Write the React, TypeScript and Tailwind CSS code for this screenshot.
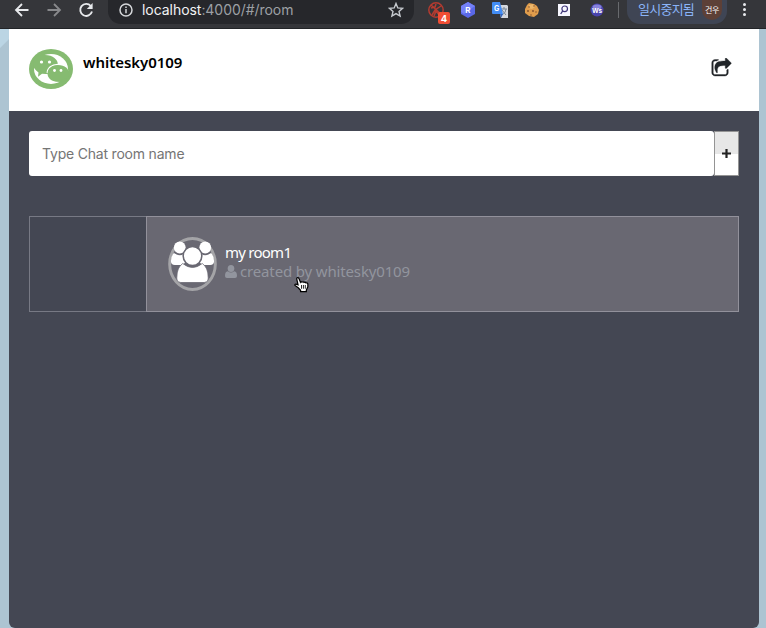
import React from "react";

function BrowserBar() {
  return (
    <div className="flex h-[29px] shrink-0 items-start border-b border-[#222427] bg-[#35363a] font-['Inter','Noto_Sans_CJK_KR',sans-serif]">
      <svg className="mt-[2px] ml-[14px] h-4 w-4" viewBox="0 0 16 16" fill="none" stroke="#e8eaed" strokeWidth="1.8">
        <path d="M14.5 8H2M8 2L2 8l6 6" />
      </svg>
      <svg className="mt-[2px] ml-[16px] h-4 w-4" viewBox="0 0 16 16" fill="none" stroke="#88898c" strokeWidth="1.8">
        <path d="M1.5 8H14M8 2l6 6-6 6" />
      </svg>
      <svg className="mt-[2px] ml-[16px] h-4 w-4" viewBox="0 0 16 16" fill="none" stroke="#e8eaed" strokeWidth="1.9">
        <path d="M12.8 4A6 6 0 1 0 14 9.6" />
        <path d="M14.6 1v6H8.8z" fill="#e8eaed" stroke="none" />
      </svg>
      <div className="ml-[14px] flex h-[24px] w-[306px] items-start rounded-b-[13px] bg-[#26272b] pl-[11px]">
        <svg className="mt-[3px] h-[14px] w-[14px]" viewBox="0 0 14 14" fill="none" stroke="#d5d7da" strokeWidth="1.5">
          <circle cx="7" cy="7" r="6" />
          <path d="M7 6v4.3M7 3.5v1.5" />
        </svg>
        <span className="ml-[9px] w-[246px] text-[14px] leading-[20px] tracking-[-0.05px] whitespace-nowrap text-[#9da0a5]">
          <span className="text-[#f1f3f4]">localhost</span>:4000/#/room
        </span>
        <svg className="mt-[2px] h-4 w-4 shrink-0" viewBox="0 0 16 16" fill="none" stroke="#c7cbd0" strokeWidth="1.4">
          <path d="M8 1.5l1.8 4.4 4.8.4-3.6 3.1 1.1 4.7L8 11.6l-4.1 2.5L5 9.4 1.4 6.3l4.8-.4z" />
        </svg>
      </div>
      <svg className="ml-[13px] h-[25px] w-[24px] shrink-0" viewBox="0 0 24 25">
        <g fill="none" stroke="#b43b30" strokeWidth="1.5">
          <circle cx="9" cy="10" r="7.2" />
          <path d="M4 5l11 10M4 8l4-1 1-3M5 15l3-5 6-4M7 16l2-5 4 5" />
        </g>
        <rect x="11" y="12" width="12" height="12" rx="2" fill="#f04e34" />
        <text x="17" y="21.5" textAnchor="middle" fontSize="9.5" fontWeight="700" fill="white" fontFamily="Inter">4</text>
      </svg>
      <svg className="ml-[9px] h-[18px] w-4 shrink-0" viewBox="0 0 16 18">
        <path d="M8 2l7 4v8l-7 4-7-4V6z" fill="#5968e7" />
        <path d="M8 2l7 4-3 2-8 6-3-2V6z" fill="#7481f7" />
        <text x="8" y="13" textAnchor="middle" fontSize="8" fontWeight="700" fill="white" fontFamily="Inter">R</text>
      </svg>
      <svg className="ml-[16px] h-[18px] w-4 shrink-0" viewBox="0 0 16 18">
        <path d="M6 5h9l1 1v12h-7z" fill="#d5d8dd" />
        <path d="M9 9h6M12 7v2M10 15q4-2 4-6M10 10l4 5" stroke="#788697" fill="none" />
        <path d="M1 2h7l3 12H1q-1 0-1-1V3q0-1 1-1" fill="#438df5" />
        <path d="M8 14h3l-2 4z" fill="#3263bd" />
        <text x="4.7" y="10.5" textAnchor="middle" fontSize="7" fontWeight="700" fill="white" fontFamily="Inter">G</text>
      </svg>
      <svg className="mt-[3px] ml-[16px] h-[14px] w-4 shrink-0" viewBox="0 0 16 14">
        <path d="M5 0l5 1 3 2 2 4-1 4-4 3-5-1-4-3V6l2-4z" fill="#e09d4c" />
        <path d="M5 2l4-1 2 3-3 2-4-1z" fill="#edb76a" />
        <g fill="#7d4b2b"><circle cx="5" cy="4" r=".8" /><circle cx="10" cy="3" r=".7" /><circle cx="4" cy="8" r=".9" /><circle cx="9" cy="8" r=".9" /><circle cx="12" cy="9" r=".7" /><circle cx="7" cy="12" r=".7" /></g>
      </svg>
      <svg className="mt-[4px] ml-[18px] h-3 w-3 shrink-0" viewBox="0 0 12 12">
        <path d="M0 0h12v12H0z" fill="#f7f7ff" />
        <circle cx="6.7" cy="4.8" r="2.8" fill="none" stroke="#40377a" strokeWidth="1.2" />
        <path d="M4.7 6.8L2.7 10" stroke="#40377a" strokeWidth="1.3" />
      </svg>
      <svg className="mt-[3px] ml-[20px] h-[14px] w-[14px] shrink-0" viewBox="0 0 14 14">
        <circle cx="7" cy="7" r="6.5" fill="#4944ad" />
        <ellipse cx="7" cy="4" rx="4.5" ry="2.5" fill="#8782db" />
        <text x="7" y="9.7" textAnchor="middle" fontSize="6.5" fontWeight="700" fill="white" fontFamily="Inter">Ws</text>
      </svg>
      <div className="mt-[2px] ml-[14px] h-4 w-px bg-[#686a6e]" />
      <div className="ml-[8px] flex h-[24px] w-[100px] shrink-0 items-start rounded-b-[13px] bg-[#3f4554] pl-[11px]">
        <span className="w-[59px] text-[13px] leading-[19px] tracking-[-0.75px] whitespace-nowrap text-[#8ab4f8]">일시중지됨</span>
        <span className="ml-[5px] h-[20px] w-[20px] rounded-t-[8px] rounded-b-full bg-[#5d4037] text-center text-[8px] leading-[20px] tracking-[-0.3px] text-white">건우</span>
      </div>
      <div className="mt-[3px] ml-[16px] flex flex-col gap-[2px]">
        <i className="h-[3px] w-[3px] rounded-full bg-[#e8eaed]" />
        <i className="h-[3px] w-[3px] rounded-full bg-[#e8eaed]" />
        <i className="h-[3px] w-[3px] rounded-full bg-[#e8eaed]" />
      </div>
    </div>
  );
}

function ChatLogo() {
  return (
    <svg className="mt-[20px] h-[40px] w-[44px]" viewBox="0 0 44 40">
      <ellipse cx="22" cy="20" rx="22" ry="20" fill="#86bb71" />
      <ellipse cx="22" cy="20" rx="17" ry="15" fill="white" />
      <path d="M4 15C4 8 10 5 16 6c8 0 13 4.5 13 10S24 25 17 25l-4-.3-4 3 .5-4.2C6 21 4 18 4 15z" fill="#86bb71" />
      <path d="M18.3 24c0-5 4.5-8.500 10.5-8.500 5 0 8.500 2.500 10 6" fill="none" stroke="white" strokeWidth="1.4" />
      <path d="M18.5 24.5c0-5 4.5-8.500 10.5-8.500 7 0 11 4 11 8.500s-4 8-8 8.500l-5-.3c-5-.7-8.500-4-8.500-8.200z" fill="#86bb71" />
      <path d="M31 31l2 3 5-5z" fill="#86bb71" />
      <g fill="white"><circle cx="12.5" cy="13" r="1.6" /><circle cx="20.5" cy="13" r="1.6" /><circle cx="25.5" cy="21.5" r="1.4" /><circle cx="32" cy="21.5" r="1.4" /></g>
    </svg>
  );
}

function GroupIcon() {
  return (
    <svg className="h-[54px] w-[49px] shrink-0" viewBox="0 0 50 54" preserveAspectRatio="none">
      <ellipse cx="25" cy="27" rx="23.3" ry="25.4" fill="none" stroke="#a4a4a7" strokeWidth="3" />
      <g fill="white">
        <circle cx="12" cy="10.5" r="6" />
        <circle cx="38" cy="10.5" r="6" />
        <path d="M6 16q6 4 10 1l2 8-3 3H7q-4 0-4-4 0-5 3-8zM44 16q-6 4-10 1l-2 8 3 3h8q4 0 4-4 0-5-3-8z" />
      </g>
      <circle cx="25" cy="19" r="9.5" fill="white" stroke="#696872" strokeWidth="1.6" />
      <path d="M15 26.5q10 8 20 0 6 4 6 14v1.500q0 3.500-4 3.500H13q-4 0-4-3.500v-1.500q0-10 6-14z" fill="white" stroke="#696872" strokeWidth=".8" />
    </svg>
  );
}

function Cursor() {
  return (
    <svg className="absolute top-[59px] left-[147px] h-[17px] w-[16px]" viewBox="0 0 17 17">
      <path d="M4.3 8.8L3 3Q2.7 1.2 4 1.2 5.1 1.2 5.6 3l1.2 3Q7.2 5 8.4 6q1.3-1 2.2.3 1.3-.7 2 .5 1.9-.4 2.1 1.2v3l-1.6 3.4V16H7v-1.3L4.5 12 1 9.5Q.6 8 2.2 8.2z" fill="white" stroke="black" strokeWidth="1.3" />
      <path d="M8 9v4M10 9v4M12 9v4" stroke="black" strokeWidth=".9" />
    </svg>
  );
}

export default function App() {
  return (
    <div className="flex h-[628px] w-[766px] flex-col overflow-hidden bg-[#adc4d2]">
      <BrowserBar />
      <div className="flex min-h-0 flex-1 bg-[linear-gradient(135deg,#bbd5e4_0_13px,#adc4d2_14px)] pr-[7px] pl-[9px]">
        <main className="flex flex-1 flex-col overflow-hidden rounded-b-[6px] bg-[#444753]">
          <header className="flex h-[82px] shrink-0 bg-white px-[20px]">
            <ChatLogo />
            <h1 className="mt-[21px] ml-[10px] flex-1 font-['Noto_Sans',sans-serif] text-[15px] leading-[24px] font-semibold tracking-[-0.04px] text-black">whitesky0109</h1>
            <svg className="mt-[29px] mr-[7px] h-[21px] w-[21px]" viewBox="0 0 1792 1792" fill="#212529" stroke="#212529" strokeWidth="30">
              <path d="M1472 989v259q0 119-84.5 203.5t-203.5 84.5h-832q-119 0-203.5-84.5t-84.5-203.5v-832q0-119 84.5-203.5t203.5-84.5h255q13 0 22.5 9.5t9.5 22.5q0 27-26 32-77 26-133 60-10 4-16 4h-112q-66 0-113 47t-47 113v832q0 66 47 113t113 47h832q66 0 113-47t47-113v-214q0-19 18-29 28-13 54-37 16-16 35-8 21 9 21 29zm237-496l-384 384q-18 19-45 19-12 0-25-5-39-17-39-59v-192h-160q-323 0-438 131-119 137-74 473 3 23-20 34-8 2-12 2-16 0-26-13-10-14-21-31t-39.5-68.5-49.5-99.5-38.5-114-17.5-122q0-49 3.5-91t14-90 28-88 47-81.5 68.5-74 94.5-61.5 124.5-48.5 159.5-30.5 196.5-11h160v-192q0-42 39-59 13-5 25-5 26 0 45 19l384 384q19 19 19 45t-19 45z" />
            </svg>
          </header>
          <div className="flex flex-col gap-[40px] p-[20px]">
            <div className="flex h-[45px]">
              <input className="w-[685px] rounded-[3px] bg-white px-[13px] font-['Inter',sans-serif] text-[14px] tracking-[-0.2px] text-[#444753] placeholder:text-[#757575]" placeholder="Type Chat room name" />
              <button className="flex w-[25px] items-center justify-center border border-[#949494] bg-[linear-gradient(#e7e7e7_50%,#fff_50%)]">
                <svg className="h-[9px] w-[9px]" viewBox="0 0 9 9"><path d="M4.5 0v9M0 4.5h9" stroke="#222" strokeWidth="2.2" /></svg>
              </button>
            </div>
            <div className="flex h-[96px] border border-[#777984]">
              <div className="w-[116px]" />
              <div className="relative -my-px -mr-px flex flex-1 items-center border border-[#92919b] bg-[#696872] pl-[21px]">
                <GroupIcon />
                <div className="-mt-[5px] ml-[8px] font-['Noto_Sans',sans-serif] text-[15px] leading-[19px]">
                  <div className="tracking-[-0.75px] text-white">my room1</div>
                  <div className="flex items-center text-[#92959e]">
                    <svg className="mt-px mr-[3px] h-[13px] w-[12px]" viewBox="0 0 12 13" fill="currentColor">
                      <ellipse cx="6" cy="3.5" rx="3.3" ry="3.5" />
                      <path d="M2.7 6.2Q6 9 9.3 6.2 12 6.500 12 11q0 2-2 2H2q-2 0-2-2 0-4.500 2.700-4.800z" />
                    </svg>
                    <span className="tracking-[-0.15px]">created by whitesky0109</span>
                  </div>
                </div>
                <Cursor />
              </div>
            </div>
          </div>
        </main>
      </div>
    </div>
  );
}
